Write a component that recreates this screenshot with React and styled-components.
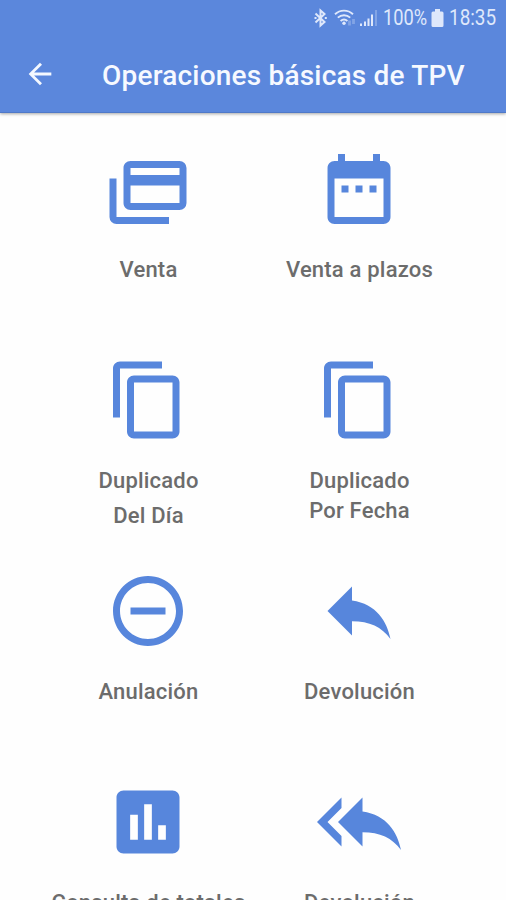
import React from 'react';
import styled, { createGlobalStyle } from 'styled-components';

const Global = createGlobalStyle`
  * { box-sizing: border-box; }
  body {
    margin: 0;
    overflow: hidden;
    background: #fefefe;
    font-family: Roboto, "Liberation Sans", sans-serif;
  }
`;

const Screen = styled.div`
  width: 506px;
  height: 900px;
  overflow: hidden;
  display: flex;
  flex-direction: column;
`;

const Header = styled.header`
  flex: none;
  height: 113px;
  background: #5b87dc;
  border-bottom: 1px solid #5079c8;
  box-shadow: 0 1px 3px rgba(0, 0, 0, 0.35);
`;

const StatusBar = styled.div`
  height: 36px;
  padding-right: 10px;
  display: flex;
  align-items: center;
  justify-content: flex-end;
  color: #dfe8fb;
`;

const StatusIcon = styled.svg`
  flex: none;
  display: block;
  width: ${(p) => p.$w}px;
  height: ${(p) => p.$h}px;
  margin-right: ${(p) => p.$gap}px;
`;

const StatusText = styled.span`
  flex: none;
  width: ${(p) => p.$w}px;
  margin-right: ${(p) => p.$gap || 0}px;
  font-size: 22px;
  line-height: 36px;
  white-space: nowrap;
  transform: scaleX(${(p) => p.$squeeze});
  transform-origin: left center;
`;

const Toolbar = styled.div`
  height: 76px;
  padding-left: 23px;
  display: flex;
  align-items: center;
`;

const BackButton = styled.button`
  width: 34px;
  height: 34px;
  margin: 0 45px 0 0;
  padding: 0;
  border: 0;
  background: none;
  color: #f4f8ff;
`;

const Title = styled.h1`
  margin: 3px 0 0;
  font-size: 28px;
  font-weight: 500;
  line-height: 36px;
  letter-spacing: 0.2px;
  white-space: nowrap;
  color: #f6f9ff;
`;

const Grid = styled.main`
  flex: none;
  display: grid;
  grid-template-columns: 211px 211px;
  grid-auto-rows: 211px;
  padding: 33.5px 0 0 42.5px;
`;

const Tile = styled.div`
  display: flex;
  flex-direction: column;
  align-items: center;
`;

const TileIcon = styled.svg`
  flex: none;
  display: block;
  width: 84px;
  height: 84px;
  fill: #5786dc;
`;

const Label = styled.div`
  margin-top: 24px;
  padding-left: 1px;
  font-size: 22px;
  font-weight: 500;
  line-height: 30px;
  letter-spacing: 0.2px;
  text-align: center;
  white-space: nowrap;
  color: #6c6c6c;
`;

const Line = styled.div`
  margin-top: ${(p) => p.$gap || 0}px;
`;

const copyPath =
  'M16 1H4c-1.1 0-2 .9-2 2v14h2V3h12V1zm3 4H8c-1.1 0-2 .9-2 2v14c0 1.1.9 2 2 2h11c1.1 0 2-.9 2-2V7c0-1.1-.9-2-2-2zm0 16H8V7h11v14z';

const operations = [
  {
    lines: ['Venta'],
    path: 'M21,8V6H7V8H21M21,16V11H7V16H21M21,4A2,2 0 0,1 23,6V16A2,2 0 0,1 21,18H7C5.89,18 5,17.1 5,16V6C5,4.89 5.89,4 7,4H21M3,20H18V22H3A2,2 0 0,1 1,20V9H3V20Z',
  },
  {
    lines: ['Venta a plazos'],
    path: 'M9 11H7v2h2v-2zm4 0h-2v2h2v-2zm4 0h-2v2h2v-2zm2-7h-1V2h-2v2H8V2H6v2H5c-1.11 0-1.99.9-1.99 2L3 20c0 1.1.89 2 2 2h14c1.1 0 2-.9 2-2V6c0-1.1-.9-2-2-2zm0 16H5V9h14v11z',
  },
  { lines: ['Duplicado', 'Del Día'], gap: 5, path: copyPath },
  { lines: ['Duplicado', 'Por Fecha'], path: copyPath },
  {
    lines: ['Anulación'],
    path: 'M7 11v2h10v-2H7zm5-9C6.48 2 2 6.48 2 12s4.48 10 10 10 10-4.48 10-10S17.52 2 12 2zm0 18c-4.41 0-8-3.59-8-8s3.59-8 8-8 8 3.59 8 8-3.59 8-8 8z',
  },
  {
    lines: ['Devolución'],
    path: 'M10 9V5l-7 7 7 7v-4.1c5 0 8.5 1.6 11 5.1-1-5-4-10-11-11z',
  },
  {
    lines: ['Consulta de totales'],
    path: 'M19 3H5c-1.1 0-2 .9-2 2v14c0 1.1.9 2 2 2h14c1.1 0 2-.9 2-2V5c0-1.1-.9-2-2-2zM9.100 17.100H6.900v-7.200h2.200zm4 0h-2.200V6.900h2.200zm4 0h-2.200v-4.200h2.200z',
  },
  {
    lines: ['Devolución'],
    path: 'M7 8V5l-7 7 7 7v-3l-4-4 4-4zm6 1V5l-7 7 7 7v-4.1c5 0 8.5 1.6 11 5.1-1-5-4-10-11-11z',
  },
];

export default function App() {
  return (
    <Screen>
      <Global />
      <Header>
        <StatusBar>
          <StatusIcon $w={13} $h={20} $gap={7} viewBox="0 0 13 20" fill="none" stroke="currentColor" strokeWidth="2">
            <path d="M1.500 5.500L10.500 14L6.500 17.500V2.500L10.500 6L1.500 14.500" />
            <path d="M0.500 10h2M10.800 10h2" />
          </StatusIcon>
          <StatusIcon $w={22} $h={18} $gap={4} viewBox="0 0 22 18" fill="none" stroke="currentColor" strokeWidth="1.9">
            <path d="M1 5.200C6 .4 14 .4 19 5.200M3.800 8.600c3.600-3.200 8.800-3.200 12.400 0M6.600 12c2-1.800 4.800-1.800 6.800 0" />
            <circle cx="10" cy="14.300" r="1.700" fill="currentColor" stroke="none" />
            <path d="M15.500 11.500v5M19.500 10v5" strokeWidth="2.800" opacity=".3" />
          </StatusIcon>
          <StatusIcon $w={18} $h={18} $gap={5} viewBox="0 0 18 18" fill="currentColor">
            <path d="M0 14.500h2V17H0zM4 12.500h2V17H4zM7.500 9.500h2V17h-2zM11 5.500h2V17h-2z" />
            <path d="M15 1h2v16h-2z" opacity=".3" />
          </StatusIcon>
          <StatusText $w={45} $gap={3} $squeeze={0.83}>100%</StatusText>
          <StatusIcon $w={13} $h={18} $gap={5} viewBox="0 0 13 18" fill="currentColor">
            <path d="M4 0h5v2.500h2a1.500 1.500 0 0 1 1.500 1.500v12.500A1.500 1.500 0 0 1 11 18H2a1.500 1.500 0 0 1-1.500-1.500V4A1.500 1.500 0 0 1 2 2.500h2z" />
          </StatusIcon>
          <StatusText $w={47} $squeeze={0.86}>18:35</StatusText>
        </StatusBar>
        <Toolbar>
          <BackButton aria-label="Atrás">
            <svg width="34" height="34" viewBox="0 0 24 24" fill="currentColor">
              <path d="M20 11H7.830l5.590-5.590L12 4l-8 8 8 8 1.410-1.410L7.830 13H20v-2z" />
            </svg>
          </BackButton>
          <Title>Operaciones básicas de TPV</Title>
        </Toolbar>
      </Header>
      <Grid>
        {operations.map((op, i) => (
          <Tile key={i}>
            <TileIcon viewBox="0 0 24 24">
              <path fillRule="evenodd" d={op.path} />
            </TileIcon>
            <Label>
              {op.lines.map((text, n) => (
                <Line key={text} $gap={n ? op.gap : 0}>{text}</Line>
              ))}
            </Label>
          </Tile>
        ))}
      </Grid>
    </Screen>
  );
}
